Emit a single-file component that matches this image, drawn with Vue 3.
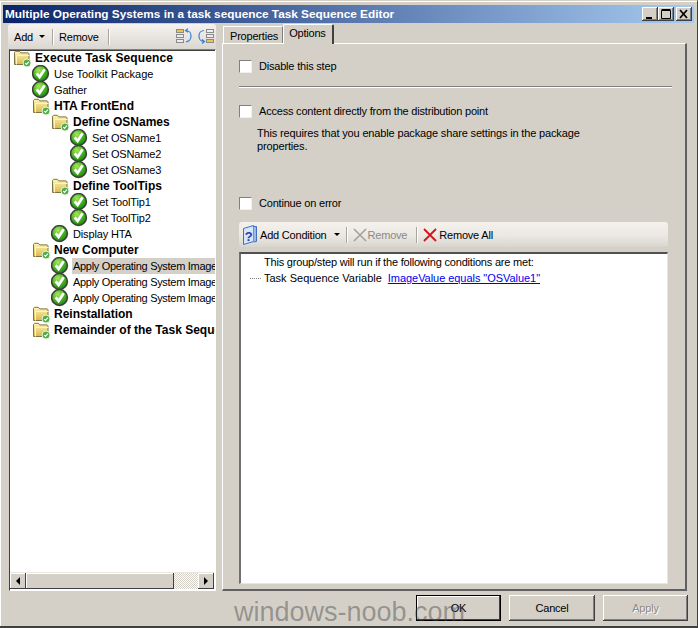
<script setup>
const tree = [
  { t: 'Execute Task Sequence', k: 'f', l: 0 },
  { t: 'Use Toolkit Package', k: 'c', l: 1, wide: true },
  { t: 'Gather', k: 'c', l: 1 },
  { t: 'HTA FrontEnd', k: 'f', l: 1 },
  { t: 'Define OSNames', k: 'f', l: 2 },
  { t: 'Set OSName1', k: 'c', l: 3 },
  { t: 'Set OSName2', k: 'c', l: 3 },
  { t: 'Set OSName3', k: 'c', l: 3 },
  { t: 'Define ToolTips', k: 'f', l: 2 },
  { t: 'Set ToolTip1', k: 'c', l: 3 },
  { t: 'Set ToolTip2', k: 'c', l: 3 },
  { t: 'Display HTA', k: 'c', l: 2 },
  { t: 'New Computer', k: 'f', l: 1 },
  { t: 'Apply Operating System Image', k: 'c', l: 2, sel: true, tight: true },
  { t: 'Apply Operating System Image', k: 'c', l: 2, tight: true },
  { t: 'Apply Operating System Image', k: 'c', l: 2, tight: true },
  { t: 'Reinstallation', k: 'f', l: 1 },
  { t: 'Remainder of the Task Sequence', k: 'f', l: 1 }
]
const lv = ['l0', 'l1', 'l2', 'l3']
</script>

<template>
  <div class="win">
    <svg class="defs" width="0" height="0">
      <defs>
        <radialGradient id="gc" cx="40%" cy="30%" r="75%">
          <stop offset="0" stop-color="#a6e85a" />
          <stop offset="0.6" stop-color="#3fae22" />
          <stop offset="1" stop-color="#1c7a12" />
        </radialGradient>
        <linearGradient id="gf" x1="0" y1="0" x2="0" y2="1">
          <stop offset="0" stop-color="#fff6b8" />
          <stop offset="1" stop-color="#d9b84a" />
        </linearGradient>
        <g id="ic-check">
          <circle cx="8.5" cy="8.5" r="7.9" fill="url(#gc)" stroke="#3a4235" stroke-width="1.5" />
          <path d="M4.600 8.400l3 3.500 5-7.600" fill="none" stroke="#fff" stroke-width="2.800" />
        </g>
        <g id="ic-folder">
          <path d="M1.5 15.5V3.5l1-1.2h4l1.2 1.6h7.5l.8 1v10.6z" fill="url(#gf)" stroke="#7d7440" />
          <path d="M3.5 15.5V6.5h13" fill="none" stroke="#fff4c0" />
          <circle cx="14" cy="14" r="4" fill="#52ad47" stroke="#e8f3e2" stroke-width="1" />
          <path d="M12.2 14l1.3 1.4 2.4-2.8" fill="none" stroke="#fff" stroke-width="1.1" />
        </g>
      </defs>
    </svg>

    <header class="title">
      <span class="title-text">Multiple Operating Systems in a task sequence Task Sequence Editor</span>
      <div class="caps">
        <button class="cap"><svg width="14" height="12"><rect x="3" y="9" width="6" height="2" fill="#000" /></svg></button>
        <button class="cap"><svg width="14" height="12"><path d="M2.5 2.5h9v8h-9zM2.5 1.5h9" fill="none" stroke="#000" /></svg></button>
        <button class="cap capx"><svg width="14" height="12"><path d="M3 2l7 8M10 2l-7 8" stroke="#000" stroke-width="1.7" fill="none" /></svg></button>
      </div>
    </header>

    <main class="body">
      <section class="left">
        <div class="lbar">
          <span class="lbtn">Add</span>
          <i class="caret"></i>
          <i class="sep sep-a"></i>
          <span class="lbtn">Remove</span>
          <i class="sep sep-b"></i>
          <svg class="mv" width="17" height="17" viewBox="0 0 17 17">
            <rect x="1.5" y="1.5" width="7" height="3" fill="#f2c24b" stroke="#8a8a8a" />
            <rect x="1.5" y="6.5" width="7" height="3" fill="#eee" stroke="#8a8a8a" />
            <rect x="1.5" y="11.5" width="7" height="3" fill="#eee" stroke="#8a8a8a" />
            <path d="M11 2.5c4 .5 5 2 5 5.5s-1 5-5 6M13 .8l-2.500 1.700 2.500 1.800" fill="none" stroke="#2f7fe0" stroke-width="1.200" />
          </svg>
          <svg class="mv mv2" width="17" height="17" viewBox="0 0 17 17">
            <rect x="8.500" y="1.500" width="7" height="3" fill="#eee" stroke="#8a8a8a" />
            <rect x="8.500" y="6.500" width="7" height="3" fill="#eee" stroke="#8a8a8a" />
            <rect x="8.500" y="11.500" width="7" height="3" fill="#f2c24b" stroke="#8a8a8a" />
            <path d="M6 2.500c-4 .5-5 2-5 5.500s1 5 5 5.500M4 11.500l2.500 2-2.500 2" fill="none" stroke="#2f7fe0" stroke-width="1.200" />
          </svg>
        </div>
        <div class="tree">
          <div class="rows">
            <div v-for="(n, i) in tree" :key="i" class="row" :class="lv[n.l]">
              <svg class="ico" width="19" height="19" viewBox="0 0 19 19">
                <use :href="n.k === 'c' ? '#ic-check' : '#ic-folder'" />
              </svg>
              <span class="lab" :class="{ bold: n.k === 'f', sel: n.sel, tight: n.tight, wide: n.wide }">{{ n.t }}</span>
            </div>
          </div>
          <div class="hscroll">
            <span class="sb"><svg width="6" height="8"><path d="M5 0v8L1 4z" fill="#000" /></svg></span>
            <span class="thumb"></span>
            <span class="hatch"></span>
            <span class="sb"><svg width="6" height="8"><path d="M1 0v8l4-4z" fill="#000" /></svg></span>
          </div>
        </div>
      </section>

      <section class="right">
        <div class="tabs">
          <span class="tab">Properties</span>
          <span class="tab on">Options</span>
        </div>
        <div class="panel">
          <label class="chk c1"><i class="box"></i><span>Disable this step</span></label>
          <hr class="div" />
          <label class="chk c2"><i class="box"></i><span>Access content directly from the distribution point</span></label>
          <p class="note">This requires that you enable package share settings in the package<br />properties.</p>
          <label class="chk c3"><i class="box"></i><span>Continue on error</span></label>

          <div class="cbar">
            <svg class="help" width="16" height="20" viewBox="0 0 16 20">
              <path d="M1.500 3.500l10-3v16l-10 3z" fill="#d8e6fa" stroke="#3f6fc0" />
              <path d="M11.500 1.500h3v15l-3 .5" fill="#9db8e6" stroke="#3f6fc0" />
              <text x="6.500" y="15.500" text-anchor="middle" class="q">?</text>
            </svg>
            <span class="ct ac">Add Condition</span>
            <i class="caret c-caret"></i>
            <i class="sep s1"></i>
            <svg class="x" width="14" height="14" viewBox="0 0 14 14"><path d="M1 1l12 12M13 1L1 13" stroke="#a5a29c" stroke-width="1.600" fill="none" /></svg>
            <span class="ct dis">Remove</span>
            <i class="sep s2"></i>
            <svg class="x xr" width="14" height="14" viewBox="0 0 14 14"><path d="M1 1l12 12M13 1L1 13" stroke="#d2141c" stroke-width="1.800" fill="none" /></svg>
            <span class="ct">Remove All</span>
          </div>

          <div class="list">
            <div class="l1st">This group/step will run if the following conditions are met:</div>
            <div class="l2nd">
              <i class="dots"></i>
              <span>Task Sequence Variable</span>
              <a class="link" href="#">ImageValue equals "OSValue1"</a>
            </div>
          </div>
        </div>
      </section>
    </main>

    <footer class="foot">
      <button class="btn def">OK</button>
      <button class="btn">Cancel</button>
      <button class="btn off">Apply</button>
    </footer>
    <div class="wm">windows-noob.com</div>
  </div>
</template>

<style>
html, body { margin: 0; background: #d4d0c8; }
</style>

<style scoped>
.win {
  position: relative; width: 698px; height: 628px; box-sizing: border-box; overflow: hidden;
  background: #d4d0c8; padding: 4px 3px 0 3px;
  border-top: 1px solid #d4d0c8; border-bottom: 2px solid #404040; border-right: 1px solid #404040;
  font: 11px/16px "Liberation Sans", Arial, sans-serif; color: #000; letter-spacing: -0.2px;
  box-shadow: inset 1px 1px 0 #fff;
}
.defs { position: absolute; }
.title {
  height: 18px; display: flex; align-items: center; justify-content: space-between;
  background: linear-gradient(90deg, #0a246a, #a6caf0); padding: 0 2px;
}
.title-text { font-weight: 700; font-size: 11.8px; letter-spacing: 0; color: #fff; white-space: nowrap; }
.caps { display: flex; }
.cap, .btn { font: inherit; letter-spacing: inherit; }
.cap {
  width: 16px; height: 14px; padding: 0; background: #d4d0c8; border: 0; display: flex; align-items: center; justify-content: center;
  box-shadow: inset -1px -1px 0 #404040, inset 1px 1px 0 #fff, inset -2px -2px 0 #808080;
}
.capx { margin-left: 2px; }
.body { display: flex; height: 568px; }
.left { width: 208px; margin-left: 5px; padding-top: 1px; display: flex; flex-direction: column; }
.lbar {
  height: 25px; display: flex; align-items: center; flex: none; box-sizing: border-box; padding-left: 6px;
  background: linear-gradient(180deg, #f6f3f0, #e6e2dd 60%, #dad6d0);
  border-radius: 3px 3px 0 0;
}
.lbtn { color: #000; }
.caret { width: 0; height: 0; border: 3px solid transparent; border-top: 3px solid #000; border-bottom: 0; margin-left: 6px; }
.sep { width: 1px; height: 16px; background: #a8a49e; box-shadow: 1px 0 0 #fff; flex: none; }
.sep-a { margin: 0 6px 0 7px; }
.sep-b { margin-left: 9px; }
.mv { margin-left: 66px; }
.mv2 { margin-left: 6px; }
.tree {
  flex: 1; display: flex; flex-direction: column; margin-left: 1px; background: #fff; box-sizing: border-box;
  border-top: 1px solid #808080; border-left: 1px solid #404040; border-right: 1px solid #fff; border-bottom: 1px solid #fff;
  box-shadow: inset 0 1px 0 #404040;
  overflow: hidden;
}
.rows { flex: 1; overflow: hidden; }
.row { height: 16px; display: flex; align-items: center; white-space: nowrap; overflow: visible; }
.l0 { padding-left: 3px; }
.l1 { padding-left: 22px; }
.l2 { padding-left: 41px; }
.l3 { padding-left: 60px; }
.ico { flex: none; margin-right: 2px; }
.lab { padding: 0 1px; line-height: 16px; letter-spacing: -0.15px; }
.lab.tight { letter-spacing: -0.3px; }
.lab.wide { letter-spacing: 0; }
.lab.sel { background: #d4d0c8; flex: 1; }
.bold { font-weight: 700; font-size: 12px; letter-spacing: 0; }
.l0 .bold { letter-spacing: 0.1px; }
.hscroll { height: 16px; display: flex; flex: none; margin: 0 1px 1px 0; box-shadow: 0 -1px 0 #e8e6e1; }
.sb {
  width: 16px; flex: none; background: #d4d0c8; display: flex; align-items: center; justify-content: center;
  box-shadow: inset -1px -1px 0 #404040, inset 1px 1px 0 #fff;
}
.thumb { width: 148px; background: #d4d0c8; box-shadow: inset -1px -1px 0 #404040, inset 1px 1px 0 #fff; }
.hatch { flex: 1; background: repeating-conic-gradient(#d4d0c8 0 25%, #fff 0 50%) 0 0 / 2px 2px; }

.right { width: 465px; margin-left: 6px; display: flex; flex-direction: column; }
.tabs { height: 20px; display: flex; align-items: flex-end; padding-left: 1px; flex: none; }
.tab {
  height: 17px; box-sizing: border-box; padding: 1px 4px 0 6px; background: #d4d0c8;
  border-top: 1px solid #fff; border-left: 1px solid #fff; border-right: 1px solid #808080;
}
.tab.on {
  height: 20px; padding: 0 6px 0 5px; margin-bottom: -1px; position: relative; z-index: 1;
  border-right: 2px solid #404040; border-radius: 2px 2px 0 0;
}
.panel {
  flex: 1; box-sizing: border-box; padding: 15px 16px 0 16px;
  background: #d4d0c8; border-top: 1px solid #fff; border-left: 1px solid #fff;
  border-right: 2px solid #606060; border-bottom: 2px solid #606060; margin-bottom: 0;
}
.chk { display: flex; align-items: center; height: 14px; }
.box {
  width: 13px; height: 13px; box-sizing: border-box; background: #fff; flex: none; margin-right: 7px;
  border: 1px solid #808080; border-right-color: #f0f0f0; border-bottom-color: #f0f0f0;
}
.div { height: 1px; border: 0; margin: 13px 0 0 0; background: #808080; width: 433px; box-shadow: 0 1px 0 #fff; }
.c2 { margin-top: 17px; }
.note { margin: 9px 0 0 18px; line-height: 13px; letter-spacing: -0.15px; }
.c3 { margin-top: 43px; }
.cbar {
  margin-top: 12px; height: 25px; width: 429px; display: flex; align-items: center; box-sizing: border-box; padding-left: 3px;
  background: linear-gradient(180deg, #f5f2ee, #ebe7e2 55%, #d9d5cf); border-radius: 3px;
}
.help { flex: none; }
.q { font: 700 13px "Liberation Sans", Arial, sans-serif; fill: #1f3fa8; }
.ct { white-space: nowrap; }
.ac { margin-left: 2px; }
.dis { color: #8b8983; margin-left: 1px; }
.c-caret { margin-left: 7px; }
.s1 { margin: 0 6px; }
.s2 { margin: 0 6px 0 9px; }
.xr { margin-right: 2px; }
.list {
  margin-top: 5px; height: 332px; width: 429px; box-sizing: border-box; background: #fff; padding: 0 23px;
  border: 1px solid #e8e6e1; border-top: 2px solid #505050; border-left: 2px solid #707070;
}
.l1st { height: 16px; }
.l2nd { height: 16px; margin-top: 0; display: flex; align-items: center; position: relative; letter-spacing: 0; }
.dots { position: absolute; left: -14px; top: 8px; width: 11px; border-top: 1px dotted #808080; }
.link { color: #0000ee; margin-left: 6px; text-decoration: underline; letter-spacing: -0.05px; }
.foot { flex: none; display: flex; justify-content: flex-end; gap: 8px; padding: 4px 6px 0 0; }
.btn {
  width: 86px; height: 26px; padding: 0; background: #d4d0c8; border: 0;
  box-shadow: inset -1px -1px 0 #404040, inset 1px 1px 0 #fff, inset -2px -2px 0 #808080;
}
.def { box-shadow: 0 0 0 1px #000, inset -1px -1px 0 #404040, inset 1px 1px 0 #fff; width: 83px; height: 24px; margin: 1px 1px 1px 0; }
.off { width: 85px; color: #8b8983; text-shadow: 1px 1px 0 #fff; }
.wm {
  position: absolute; left: 234px; top: 594px; font: 27px/34px "Liberation Sans", Arial, sans-serif; letter-spacing: 0;
  color: rgba(70, 70, 70, 0.45); pointer-events: none; white-space: nowrap;
}
</style>
